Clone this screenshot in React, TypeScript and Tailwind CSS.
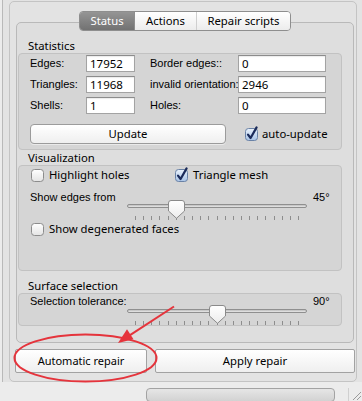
import React from "react";

const SANS = "font-['Noto_Sans',sans-serif]";
const HELV = "font-['Liberation_Sans',Arial,sans-serif]";

function Checkbox({ checked, id }: { checked?: boolean; id: string }) {
  return (
    <svg width="13" height="13" viewBox="0 0 13 13" className="shrink-0 overflow-visible">
      <defs>
        <linearGradient id={`w${id}`} x1="0" y1="0" x2="0" y2="1">
          <stop offset="0" stopColor="#ffffff" />
          <stop offset="1" stopColor="#e4e4e4" />
        </linearGradient>
        <linearGradient id={`b${id}`} x1="0" y1="0" x2="0" y2="1">
          <stop offset="0" stopColor="#eaf2fc" />
          <stop offset="1" stopColor="#a8c3e6" />
        </linearGradient>
      </defs>
      <rect
        x="0.5"
        y="0.5"
        width="12"
        height="12"
        rx="3"
        fill={checked ? `url(#b${id})` : `url(#w${id})`}
        stroke={checked ? "#6a82a6" : "#8c8c8c"}
      />
      {checked && (
        <path
          d="M3 6.6 L5.6 10 L11.6 -0.6"
          fill="none"
          stroke="#1b2b5a"
          strokeWidth="2.2"
          strokeLinecap="round"
          strokeLinejoin="round"
        />
      )}
    </svg>
  );
}

function Thumb({ id }: { id: string }) {
  return (
    <svg width="17" height="19" viewBox="0 0 17 19">
      <defs>
        <linearGradient id={`t${id}`} x1="0" y1="0" x2="0" y2="1">
          <stop offset="0" stopColor="#ffffff" />
          <stop offset="1" stopColor="#ececec" />
        </linearGradient>
      </defs>
      <path
        d="M3 0.5 H14 Q16.5 0.5 16.5 3 V11 L8.5 18.3 L0.5 11 V3 Q0.5 0.5 3 0.5 Z"
        fill={`url(#t${id})`}
        stroke="#8a8a8a"
      />
    </svg>
  );
}

function Slider({ value, id }: { value: number; id: string }) {
  const left = Math.round((value / 180) * 163);
  const ticks = Array.from({ length: 21 }, (_, i) => Math.round(8 + (i * 163) / 20));
  return (
    <div className="relative w-[180px] h-[20px] shrink-0">
      <div className="absolute left-0 right-0 top-[4px] h-[4px] rounded-full border border-[#8f8f8f] bg-gradient-to-b from-[#bdbdbd] to-[#e9e9e9]" />
      {ticks.map((t, i) => (
        <div key={i} className="absolute top-[16px] w-px h-[4px] bg-[#8d8d8d]" style={{ left: t }} />
      ))}
      <div className="absolute top-0" style={{ left }}>
        <Thumb id={id} />
      </div>
    </div>
  );
}

function Field({ value, w }: { value: string; w: string }) {
  return (
    <div
      className={`${w} h-[17px] bg-white border border-[#a3a3a3] border-t-[#8c8c8c] shadow-[inset_0_1px_1px_rgba(0,0,0,0.08)] pl-[3px] flex items-center text-[11.5px] leading-none ${SANS}`}
    >
      {value}
    </div>
  );
}

function Label({ children, pad }: { children: React.ReactNode; pad?: boolean }) {
  return (
    <div className={`${HELV} text-[11px] leading-[17px] whitespace-nowrap ${pad ? "pl-[15px]" : ""}`}>
      {children}
    </div>
  );
}

export default function App() {
  return (
    <div className={`relative w-[362px] h-[401px] overflow-hidden bg-[#ececec] ${SANS} text-[11.3px] text-black`}>
      <div className="h-[382px] ml-[2px] border-l border-[#b9b9b9] bg-[#e3e3e3] pl-[6px] pr-[5px] pt-px flex">
        <div className="flex-1 flex flex-col rounded-[5px] border border-[#c4c4c4] bg-[#e3e3e3]">
          <div className="ml-[6px] mr-[2px] pt-[9px] flex flex-col">
            {/* Tabs */}
            <div className="relative z-10 flex justify-center h-[20px]">
              <div className="flex h-[20px] rounded-[4px] border border-[#8e8e8e] overflow-hidden text-[11.3px] leading-none">
                <div className="w-[54px] flex items-center justify-center bg-gradient-to-b from-[#959595] to-[#727272] text-white">
                  Status
                </div>
                <div className="w-[62px] flex items-center justify-center bg-gradient-to-b from-white to-[#ececec] border-l border-[#8e8e8e]">
                  Actions
                </div>
                <div className="w-[94px] flex items-center justify-center bg-gradient-to-b from-white to-[#ececec] border-l border-[#cfcfcf]">
                  Repair scripts
                </div>
              </div>
            </div>

            {/* Tab box */}
            <div className="-mt-[9px] h-[321px] rounded-[5px] border border-[#b9b9b9] bg-[#dedede] flex flex-col pl-px pr-[11px]">
              <div className="mt-[16px] h-[14px] leading-[14px] pl-[10px]">Statistics</div>
              <div className="h-[97px] rounded-[4px] border border-[#c2c2c2] bg-[#d5d5d5] pt-px pl-[11px] flex flex-col">
                <div className="grid grid-cols-[56px_49px_103px_88px] gap-y-[4px] items-center">
                  <Label>Edges:</Label>
                  <Field value="17952" w="w-[49px]" />
                  <Label pad>Border edges::</Label>
                  <Field value="0" w="w-[88px]" />
                  <Label>Triangles:</Label>
                  <Field value="11968" w="w-[49px]" />
                  <Label pad>invalid orientation:</Label>
                  <Field value="2946" w="w-[88px]" />
                  <Label>Shells:</Label>
                  <Field value="1" w="w-[49px]" />
                  <Label pad>Holes:</Label>
                  <Field value="0" w="w-[88px]" />
                </div>
                <div className="mt-[10px] flex items-center">
                  <div className="w-[196px] h-[20px] rounded-[4px] border border-[#9b9b9b] bg-gradient-to-b from-white to-[#efefef] flex items-center justify-center shadow-[0_1px_0_rgba(255,255,255,0.5)]">
                    Update
                  </div>
                  <div className="ml-[19px] flex items-center gap-[4px]">
                    <Checkbox checked id="au" />
                    <span>auto-update</span>
                  </div>
                </div>
              </div>

              <div className="mt-px h-[14px] leading-[14px] pl-[10px]">Visualization</div>
              <div className="h-[106px] rounded-[4px] border border-[#c2c2c2] bg-[#d5d5d5] flex flex-col">
                <div className="mt-[3px] h-[13px] pl-[12px] flex items-center">
                  <div className="w-[144px] flex items-center gap-[5px]">
                    <Checkbox id="hh" />
                    <span>Highlight holes</span>
                  </div>
                  <div className="flex items-center gap-[5px]">
                    <Checkbox checked id="tm" />
                    <span>Triangle mesh</span>
                  </div>
                </div>
                <div className="mt-[8px] pl-[11px] flex items-start">
                  <div className={`w-[97px] ${HELV} text-[11px] leading-[14px]`}>Show edges from</div>
                  <div className="mt-[10px]">
                    <Slider value={45} id="s1" />
                  </div>
                  <div className={`ml-[6px] ${HELV} text-[11px] leading-[14px]`}>45°</div>
                </div>
                <div className="mt-[3px] h-[13px] pl-[12px] flex items-center gap-[5px]">
                  <Checkbox id="dg" />
                  <span>Show degenerated faces</span>
                </div>
              </div>

              <div className="mt-[8px] h-[14px] leading-[14px] pl-[10px]">Surface selection</div>
              <div className="h-[33px] rounded-[4px] border border-[#c2c2c2] bg-[#d5d5d5] pl-[11px] flex items-start">
                <div className={`w-[97px] ${HELV} text-[11px] leading-[14px]`}>Selection tolerance:</div>
                <div className="mt-[11px]">
                  <Slider value={90} id="s2" />
                </div>
                <div className={`ml-[6px] ${HELV} text-[11px] leading-[14px]`}>90°</div>
              </div>
            </div>
          </div>

          {/* Bottom buttons */}
          <div className="mt-[6px] ml-[5px] flex gap-[8px]">
            <div className="w-[132px] h-[24px] border border-[#a2a2a2] rounded-[2px] bg-gradient-to-b from-white to-[#efefef] flex items-center justify-center text-[11px]">
              Automatic repair
            </div>
            <div className="w-[200px] h-[24px] border border-[#a2a2a2] rounded-[2px] bg-gradient-to-b from-white to-[#efefef] flex items-center justify-center text-[11.3px]">
              Apply repair
            </div>
          </div>
        </div>
      </div>

      {/* Status bar */}
      <div className="h-[19px] flex items-start pl-[146px] pt-[6px]">
        <div className="w-[189px] h-[14px] rounded-[4px] border border-[#a3a3a3] bg-gradient-to-b from-[#e6e6e6] to-[#d2d2d2]" />
        <svg width="14" height="13" viewBox="0 0 14 13" className="ml-[13px]">
          <line x1="0.5" y1="0" x2="0.5" y2="13" stroke="#d0d0d0" />
          <line x1="13" y1="4" x2="5" y2="12" stroke="#9a9a9a" />
          <line x1="13" y1="8" x2="9" y2="12" stroke="#9a9a9a" />
        </svg>
      </div>

      {/* Annotation overlay */}
      <svg className="absolute inset-0 pointer-events-none" width="362" height="401" viewBox="0 0 362 401">
        <ellipse cx="85.5" cy="358" rx="71" ry="23.5" fill="none" stroke="#e5343c" strokeWidth="2" />
        <line x1="174" y1="306.5" x2="130" y2="335.2" stroke="#e5343c" strokeWidth="2" />
        <polygon points="118,343 133.5,339.2 127,329.2" fill="#e5343c" />
      </svg>
    </div>
  );
}
